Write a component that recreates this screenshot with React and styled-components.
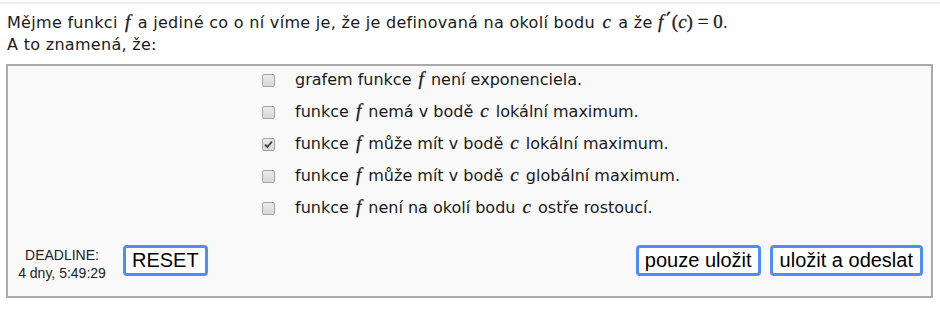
import React from "react";
import styled, { createGlobalStyle } from "styled-components";

const Global = createGlobalStyle`
  html, body { margin: 0; padding: 0; background: #fff; }
  body { font-family: "DejaVu Sans", Verdana, sans-serif; color: #111; }
`;

const Page = styled.div`
  border-top: 2px solid #eeeeee;
  margin-top: 2px;
  padding: 8px 8px 0 7px;
`;

const Question = styled.div`
  font-size: 16px;
  letter-spacing: 0.3px;
  line-height: 22px;
  color: #1a1a1a;
`;

const M = styled.span`
  font-family: "Liberation Serif", "DejaVu Serif", serif;
  font-style: ${(p) => (p.$up ? "normal" : "italic")};
  font-size: 19px;
  line-height: 0;
  letter-spacing: 0;
  margin: 0 ${(p) => (p.$tight ? 0 : 2)}px;
  -webkit-text-stroke: 0.3px currentColor;
`;

const Prime = styled.span`
  font-family: "DejaVu Sans", sans-serif;
  font-size: 19px;
  line-height: 0;
  font-style: normal;
  vertical-align: 2px;
  margin: 0 1px 0 3px;
  -webkit-text-stroke: 0.5px currentColor;
`;

const Panel = styled.div`
  margin: 8px 0 0 -1px;
  width: 927px;
  box-sizing: border-box;
  border: 2px solid #aaaaaa;
  background: #f9f9f9;
  padding: 1px 0 16px 0;
  display: flex;
  flex-direction: column;
`;

const Options = styled.ul`
  list-style: none;
  margin: 0;
  padding: 0 0 0 254px;
  display: flex;
  flex-direction: column;
  gap: 6px;
`;

const Option = styled.li`
  height: 26px;
  line-height: 26px;
  display: flex;
  align-items: center;
  font-size: 16px;
  color: #1a1a1a;
`;

const Box = styled.span`
  width: 11px;
  height: 11px;
  flex: none;
  margin: 0 20px 0 0;
  border: 1px solid #a3a3a3;
  border-radius: 2px;
  background: linear-gradient(#ebebeb, #d9d9d9);
  display: flex;
  align-items: center;
  justify-content: center;
`;

const Footer = styled.div`
  margin-top: 19px;
  display: flex;
  align-items: center;
  padding: 0 8px 0 8px;
`;

const Deadline = styled.div`
  font-family: "Liberation Sans", Arial, sans-serif;
  font-size: 14px;
  line-height: 18px;
  text-align: center;
  color: #222;
  width: 92px;
  margin: 6px 15px -2px 0;
`;

const Button = styled.button`
  font-family: "Liberation Sans", Arial, sans-serif;
  font-size: 20px;
  color: #000;
  background: #fff;
  border: 3px solid #4d8ff7;
  border-radius: 4px;
  height: 31px;
  padding: 0 ${(p) => p.$px || 7}px;
  margin-left: ${(p) => p.$ml || 0}px;
  line-height: 1;
  cursor: pointer;
`;

const Spacer = styled.div`
  flex: 1;
`;

const options = [
  ["grafem funkce ", "f", " není exponenciela."],
  ["funkce ", "f", " nemá v bodě ", "c", " lokální maximum."],
  ["funkce ", "f", " může mít v bodě ", "c", " lokální maximum."],
  ["funkce ", "f", " může mít v bodě ", "c", " globální maximum."],
  ["funkce ", "f", " není na okolí bodu ", "c", " ostře rostoucí."],
];

const Check = () => (
  <svg width="9" height="9" viewBox="0 0 9 9">
    <path d="M1 4.6 L3.4 7 L8 1.5" fill="none" stroke="#3a3a3a" strokeWidth="1.8" />
  </svg>
);

export default function App() {
  return (
    <>
      <Global />
      <Page>
        <Question>
          Mějme funkci <M>f</M> a jediné co o ní víme je, že je definovaná na
          okolí bodu <M>c</M> a že{" "}
          <M $tight>f</M>
          <Prime>′</Prime>
          <M $up $tight>(</M>
          <M $tight>c</M>
          <M $up $tight>) = 0</M>.
          <br />A to znamená, že:
        </Question>
        <Panel>
          <Options>
            {options.map((parts, i) => (
              <Option key={i}>
                <Box>{i === 2 && <Check />}</Box>
                <span>
                  {parts.map((t, j) =>
                    j % 2 === 1 ? <M key={j}>{t}</M> : <span key={j}>{t}</span>
                  )}
                </span>
              </Option>
            ))}
          </Options>
          <Footer>
            <Deadline>
              DEADLINE:
              <br />4 dny, 5:49:29
            </Deadline>
            <Button $px={6}>RESET</Button>
            <Spacer />
            <Button $px={6}>pouze uložit</Button>
            <Button $ml={9}>uložit a odeslat</Button>
          </Footer>
        </Panel>
      </Page>
    </>
  );
}
